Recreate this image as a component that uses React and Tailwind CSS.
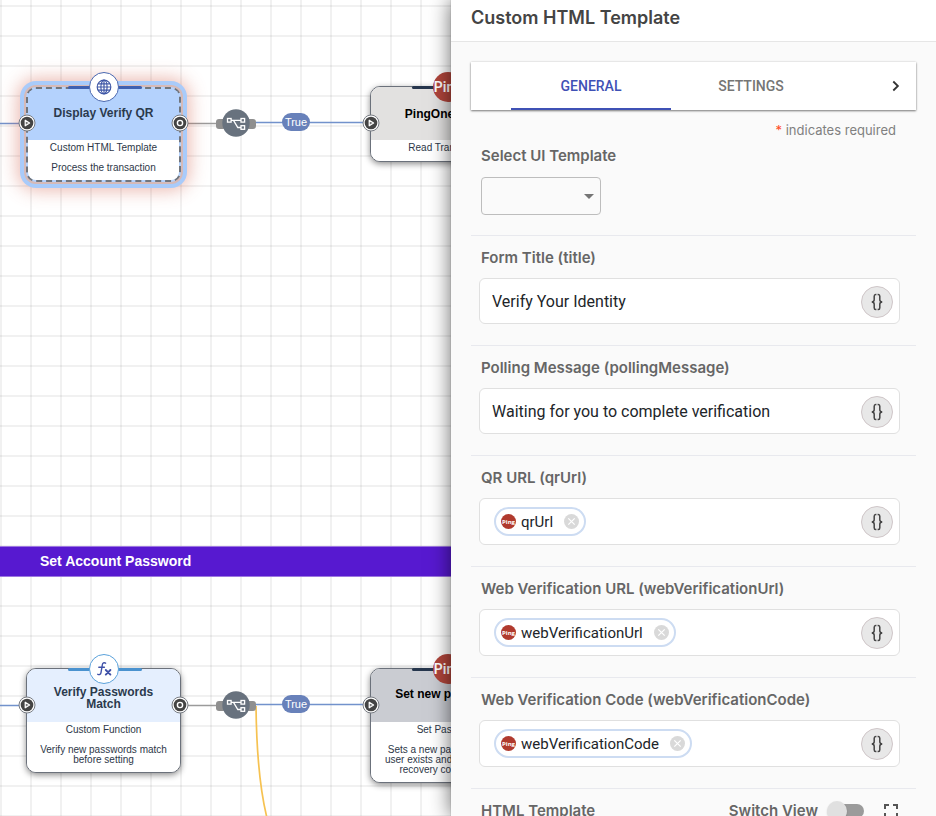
import React from "react";

const SANS = "font-['Liberation_Sans',Arial,sans-serif]";
const INTER = "font-['Inter',sans-serif]";

function Port({ kind, className }) {
  return (
    <svg viewBox="0 0 18 18" className={"absolute z-10 h-[18px] w-[18px] " + className} aria-hidden="true">
      <circle cx="9" cy="9" r="8" fill="#fff" stroke="#777b82" strokeWidth="1" />
      <circle cx="9" cy="9" r="6.3" fill="#444" />
      {kind === "in" ? (
        <path d="M7.2 6.2v5.6L11.6 9z" fill="#777" stroke="#fff" strokeWidth="1.2" strokeLinejoin="round" />
      ) : (
        <circle cx="9" cy="9" r="2.6" fill="none" stroke="#fff" strokeWidth="1.4" />
      )}
    </svg>
  );
}

function GlobeIcon() {
  return (
    <svg viewBox="0 0 16 16" className="h-4 w-4" fill="none" stroke="#3f57a6" strokeWidth="1.2" aria-hidden="true">
      <circle cx="8" cy="8" r="6.8" />
      <ellipse cx="8" cy="8" rx="3.1" ry="6.8" />
      <path d="M8 1.2v13.6M1.2 8h13.6M2.2 4.8h11.6M2.2 11.2h11.6" />
    </svg>
  );
}

function FxIcon() {
  return (
    <svg viewBox="0 0 18 18" className="h-[18px] w-[18px]" fill="none" stroke="#3f51a8" strokeLinecap="round" aria-hidden="true">
      <path d="M10.6 3.2C9 2.1 7.6 3 7.3 5L6 12.6c-.3 1.9-1.6 2.5-3.2 1.7M3.8 7.2h5.6" strokeWidth="1.4" />
      <path d="M10.8 10l4.6 4.6M15.4 10l-4.6 4.6" strokeWidth="1.9" />
    </svg>
  );
}

function Node({ place, head, title, titleColor, bar, badge, lines, footer, selected, outPort }) {
  return (
    <article className={"absolute w-[156px] " + place}>
      <div
        className={
          "mr-px overflow-hidden rounded-[10px] text-center " +
          (selected
            ? "mt-px border-2 border-dashed border-[#70757d] bg-[#b4d2fd] shadow-[0_0_0_2px_#d6bab8,0_0_0_6px_#a9cbfa,0_0_18px_8px_rgba(205,80,60,0.42)]"
            : "border border-[#6b717b] bg-white shadow-[0_2px_6px_rgba(0,0,0,0.45)]")
        }
      >
        <header className={"flex items-center justify-center text-[12px] leading-3 font-bold " + head + " " + titleColor}>
          <h3 className="whitespace-pre">{title}</h3>
        </header>
        <div className={"bg-white text-[10px] leading-[10px] whitespace-pre text-[#2d3748] " + footer}>
          <p className="pt-[3px]">{lines[0]}</p>
          {lines[1] && <p className="pt-[10px]">{lines[1]}</p>}
        </div>
      </div>
      <span className={"absolute top-0 left-[42px] h-[3px] w-[74px] rounded-full " + bar} />
      <div className="absolute inset-x-0 -top-[14px] flex justify-center">{badge}</div>
      <Port kind="in" className="top-[28px] -left-[8px]" />
      {outPort && <Port kind="out" className="top-[28px] -right-[7px]" />}
    </article>
  );
}

function PingBadge() {
  return (
    <span className="flex h-[30px] w-[30px] items-center justify-center overflow-hidden rounded-full bg-[#b1453b] font-['Roboto',sans-serif] text-[14px] font-semibold text-white">
      Ping
    </span>
  );
}

function Branch({ place }) {
  return (
    <div className={"absolute " + place}>
      <svg viewBox="0 0 40 28" className="h-7 w-10" aria-hidden="true">
        <rect x="0" y="10" width="10" height="10" rx="3" fill="#8f8f8f" />
        <rect x="30" y="10" width="10" height="10" rx="3" fill="#8f8f8f" />
        <circle cx="20" cy="14" r="13.7" fill="#68727e" />
        <g fill="none" stroke="#fff" strokeWidth="1.3">
          <rect x="11.5" y="9.5" width="3.6" height="3.6" />
          <rect x="25" y="9.5" width="3.6" height="3.6" />
          <rect x="25" y="16.7" width="3.6" height="3.6" />
          <path d="M15 11.3h10M17.5 11.3l4.3 7.2H25" />
        </g>
      </svg>
    </div>
  );
}

function TruePill({ place }) {
  return (
    <span className={"absolute flex h-[18px] w-7 items-center justify-center rounded-full bg-[#6881ba] text-[11px] text-white " + place}>
      True
    </span>
  );
}

function Canvas() {
  return (
    <main
      className={
        "relative min-w-0 flex-1 overflow-hidden bg-white bg-[linear-gradient(to_right,rgba(0,0,0,0.055)_2px,transparent_2px),linear-gradient(to_bottom,rgba(0,0,0,0.055)_2px,transparent_2px)] bg-[length:30px_30px] bg-[position:0_5px] " +
        SANS
      }
    >
      <svg className="absolute top-0 left-0 h-[816px] w-[451px]" fill="none" aria-hidden="true">
        <path d="M0 123.500H20M250 122.500H364M250 704.500H364M0 705.500H20" stroke="#7292cc" strokeWidth="1.500" />
        <path d="M188 123.500H218M188 705.500H218" stroke="#9b9b9b" strokeWidth="1.500" />
        <path d="M256 706C256.500 750 260 790 267 818" stroke="#f6c251" strokeWidth="1.700" />
      </svg>

      <Node
        place="top-[86px] left-[26px]"
        head="h-[51px] bg-[#b4d2fd] pb-1"
        titleColor="text-[#2b3a4d]"
        title="Display Verify QR"
        bar="bg-[#3f60b0]"
        badge={
          <span className="flex h-[30px] w-[30px] items-center justify-center rounded-full border border-[#4a68b0] bg-white">
            <GlobeIcon />
          </span>
        }
        lines={["Custom HTML Template", "Process the transaction"]}
        footer="h-[40px]"
        selected
        outPort
      />
      <Branch place="top-[109px] left-[216px]" />
      <TruePill place="top-[113px] left-[282px]" />
      <Node
        place="top-[86px] left-[370px]"
        head="h-[53px] bg-[#e2e1e0]"
        titleColor="text-black"
        title="PingOne Verify"
        bar="bg-[#26364d]"
        badge={<PingBadge />}
        lines={["Read Transaction"]}
        footer="h-[21px]"
      />

      <div className="absolute inset-x-0 top-[546px] flex h-[31px] items-center border-y border-[#9d77e0] bg-[#5719d0] pl-10">
        <h2 className="text-[14px] font-bold text-white">Set Account Password</h2>
      </div>

      <Node
        place="top-[668px] left-[26px]"
        head="h-[53px] bg-[#e5effe] pt-1"
        titleColor="text-[#2b3a4d]"
        title={"Verify Passwords\nMatch"}
        bar="bg-[#4a92cf]"
        badge={
          <span className="flex h-[30px] w-[30px] items-center justify-center rounded-full border border-[#5ba2db] bg-white">
            <FxIcon />
          </span>
        }
        lines={["Custom Function", "Verify new passwords match\nbefore setting"]}
        footer="h-[50px]"
        outPort
      />
      <Branch place="top-[691px] left-[216px]" />
      <TruePill place="top-[695px] left-[282px]" />
      <Node
        place="top-[668px] left-[370px]"
        head="h-[53px] bg-[#caccd2] pb-1"
        titleColor="text-black"
        title="Set new password"
        bar="bg-[#26364d]"
        badge={<PingBadge />}
        lines={["Set Password", "Sets a new password if the\nuser exists and provided the\nrecovery code is valid"]}
        footer="h-[60px]"
      />
    </main>
  );
}

function BraceButton() {
  return (
    <button
      type="button"
      aria-label="Insert variable"
      className="flex h-8 w-8 shrink-0 items-center justify-center rounded-full border border-[#cfc6c8] bg-[#e8e8e8]"
    >
      <svg viewBox="0 0 12 18" className="h-[18px] w-3" fill="none" stroke="#444" strokeWidth="1.500" aria-hidden="true">
        <path d="M5.400 1.500H4.700Q3.200 1.500 3.200 3.300V6.800Q3.200 8.800 0.800 9Q3.200 9.200 3.200 11.200V14.700Q3.200 16.500 4.700 16.500H5.400" />
        <path d="M6.600 1.500H7.300Q8.800 1.500 8.800 3.300V6.800Q8.800 8.800 11.200 9Q8.800 9.200 8.800 11.200V14.700Q8.800 16.500 7.300 16.500H6.600" />
      </svg>
    </button>
  );
}

const LABEL = "block text-[15px] leading-5 font-semibold text-[#666] ";

function TextField({ id, label, value }) {
  return (
    <section className="border-t border-[#e8e9ee] pt-3 pb-[21px]">
      <label htmlFor={id} className={LABEL + "pl-[10px]"}>
        {label}
      </label>
      <div className="mt-[10px] mr-4 ml-2 flex h-[46px] items-center rounded-md border border-[#e0e0e0] bg-white pt-px pr-[6px] pl-3">
        <input
          id={id}
          defaultValue={value}
          className="min-w-0 flex-1 bg-transparent font-['Roboto',sans-serif] text-[16px] text-[#212529] outline-none"
        />
        <BraceButton />
      </div>
    </section>
  );
}

function ChipField({ id, label, chip }) {
  return (
    <section className="border-t border-[#e8e9ee] pt-3 pb-[21px]">
      <label htmlFor={id} className={LABEL + "pl-[10px]"}>
        {label}
      </label>
      <div className="mt-[10px] mr-4 ml-2 flex h-[47px] items-center rounded-md border border-[#e0e0e0] bg-white pr-[6px] pl-[14px]">
        <span className="flex h-[29px] items-center rounded-full border-2 border-[#cddcf2] bg-white px-[5px]">
          <svg viewBox="0 0 15 15" className="mr-[5px] h-[15px] w-[15px]" aria-hidden="true">
            <circle cx="7.500" cy="7.500" r="7.500" fill="#b03a2e" />
            <text x="7.500" y="9.700" textAnchor="middle" fontSize="6" fontWeight="700" fill="#fff" fontFamily="Open Sans, sans-serif">
              Ping
            </text>
          </svg>
          <span className="font-['Roboto',sans-serif] text-[15px] leading-5 text-[#212529]">{chip}</span>
          <button type="button" aria-label={"Remove " + chip} className="ml-[11px] h-[15px] w-[15px]">
            <svg viewBox="0 0 15 15" className="h-[15px] w-[15px]" aria-hidden="true">
              <circle cx="7.500" cy="7.500" r="7.500" fill="#d9d9d9" />
              <path d="M4.300 4.300l6.400 6.400M10.700 4.300l-6.400 6.400" stroke="#fff" strokeWidth="1.200" />
            </svg>
          </button>
        </span>
        <input id={id} className="min-w-0 flex-1 bg-transparent outline-none" />
        <BraceButton />
      </div>
    </section>
  );
}

function Panel() {
  return (
    <aside className={"relative z-20 flex w-[485px] shrink-0 flex-col bg-[#fafafa] shadow-[0_0_20px_rgba(0,0,0,0.6)] " + INTER}>
      <header className="flex h-[42px] shrink-0 items-center border-b border-[#e6e6e6] bg-white px-5 pb-[6px]">
        <h1 className="text-[18px] leading-6 font-semibold text-[#444]">Custom HTML Template</h1>
      </header>

      <div className="min-h-0 flex-1 overflow-hidden px-5 pt-5">
        <nav
          role="tablist"
          className="flex h-[48px] bg-white font-['Roboto',sans-serif] text-[14px] font-medium shadow-[0_1px_2px_rgba(0,0,0,0.5),0_0_2px_rgba(0,0,0,0.12)]"
        >
          <span className="w-10" />
          <button type="button" role="tab" aria-selected="true" className="w-40 border-b-2 border-[#3f51b5] pt-[2px] text-[#3f51b5]">
            GENERAL
          </button>
          <button type="button" role="tab" aria-selected="false" className="w-40 text-[#757575]">
            SETTINGS
          </button>
          <span className="flex-1" />
          <button type="button" aria-label="Next tabs" className="flex w-10 items-center justify-center">
            <svg viewBox="0 0 8 12" className="h-3 w-2" fill="none" stroke="#333" strokeWidth="1.800" aria-hidden="true">
              <path d="M1.300 1.500L5.900 6L1.300 10.500" />
            </svg>
          </button>
        </nav>

        <p className="mt-[10px] pr-5 text-right text-[13px] leading-5 text-[#808080]">
          <span className="text-[#ff4b1f]">*</span> indicates required
        </p>

        <section className="pt-[6px] pb-5 pl-[10px]">
          <label htmlFor="ui-template" className={LABEL}>
            Select UI Template
          </label>
          <div className="relative mt-[11px] w-[120px]">
            <select id="ui-template" className="block h-[38px] w-full appearance-none rounded-[4px] border border-[#bdbdbd] bg-transparent">
              <option value=""></option>
            </select>
            <svg viewBox="0 0 10 5" className="pointer-events-none absolute top-[17px] right-[7px] h-[5px] w-[10px]" aria-hidden="true">
              <path d="M0 0h10L5 5z" fill="#757575" />
            </svg>
          </div>
        </section>

        <TextField id="title" label="Form Title (title)" value="Verify Your Identity" />
        <TextField id="polling" label="Polling Message (pollingMessage)" value="Waiting for you to complete verification" />
        <ChipField id="qr" label="QR URL (qrUrl)" chip="qrUrl" />
        <ChipField id="web-url" label="Web Verification URL (webVerificationUrl)" chip="webVerificationUrl" />
        <ChipField id="web-code" label="Web Verification Code (webVerificationCode)" chip="webVerificationCode" />

        <section className="flex items-center border-t border-[#e8e9ee] pt-3 pr-[18px] pl-[10px]">
          <h2 className={LABEL}>HTML Template</h2>
          <label className={LABEL + "ml-auto flex! items-center"}>
            Switch View
            <input type="checkbox" role="switch" className="peer sr-only" />
            <span className="ml-[9px] flex h-5 w-[37px] items-center">
              <span className="z-10 h-5 w-5 rounded-full bg-[#e0e0e0] shadow-[0_1px_2px_rgba(0,0,0,0.15)]" />
              <span className="-ml-[14px] h-[14px] flex-1 rounded-full bg-[#9b9b9b]" />
            </span>
          </label>
          <button type="button" aria-label="Full screen" className="ml-5">
            <svg viewBox="0 0 14 14" className="h-[14px] w-[14px]" fill="none" stroke="#555" strokeWidth="2" aria-hidden="true">
              <path d="M1 5V1h4M9 1h4v4M13 9v4H9M5 13H1V9" />
            </svg>
          </button>
        </section>
      </div>
    </aside>
  );
}

export default function App() {
  return (
    <div className="flex h-screen w-full overflow-hidden">
      <Canvas />
      <Panel />
    </div>
  );
}
